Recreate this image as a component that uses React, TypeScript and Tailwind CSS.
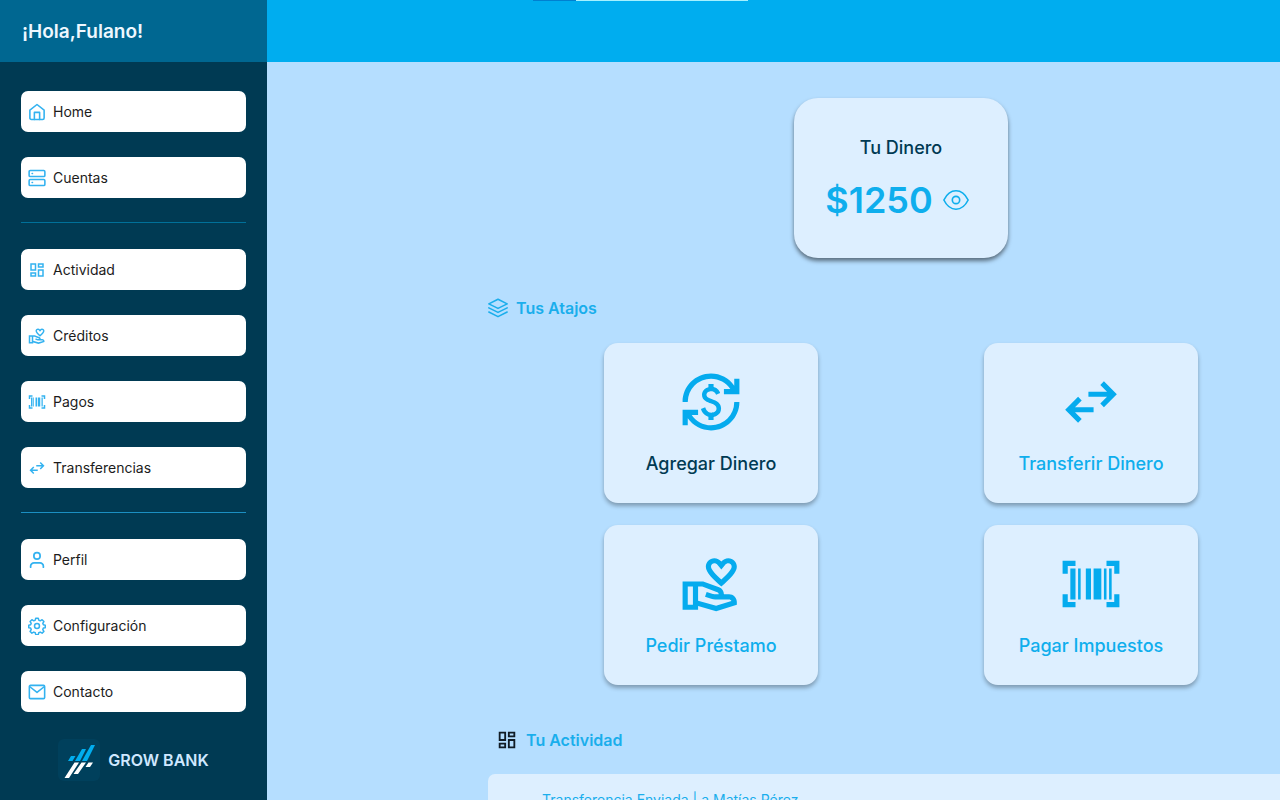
import type { ReactNode } from "react";
import { MdCurrencyExchange, MdOutlineDashboard, MdOutlineVolunteerActivism } from "react-icons/md";

type IconProps = { className?: string };

function LineIcon({ className, width = 1.5, children }: IconProps & { width?: number; children: ReactNode }) {
  return (
    <svg
      viewBox="0 0 24 24"
      fill="none"
      stroke="currentColor"
      strokeWidth={width}
      strokeLinecap="round"
      strokeLinejoin="round"
      className={className}
      aria-hidden="true"
    >
      {children}
    </svg>
  );
}

const HomeIcon = ({ className }: IconProps) => (
  <LineIcon className={className} width={2.1}>
    <path d="M2.500 9.500 12 2l9.500 7.500V20a2 2 0 0 1-2 2h-15a2 2 0 0 1-2-2z" />
    <path d="M8.500 22v-9.500h7V22" />
  </LineIcon>
);

const ServerIcon = ({ className }: IconProps) => (
  <LineIcon className={className} width={2.1}>
    <rect x="1.5" y="2" width="21" height="8" rx="1.500" />
    <rect x="1.5" y="14" width="21" height="8" rx="1.500" />
    <path d="M5.5 6h.5M5.5 18h.5" />
  </LineIcon>
);

const UserIcon = ({ className }: IconProps) => (
  <LineIcon className={className} width={2.300}>
    <circle cx="12" cy="6.5" r="4.2" />
    <path d="M3.500 21.500v-1.200a4.500 4.500 0 0 1 4.500-4.500h8a4.500 4.500 0 0 1 4.500 4.500v1.200" />
  </LineIcon>
);

const GearIcon = ({ className }: IconProps) => (
  <LineIcon className={className} width={2}>
    <circle cx="12" cy="12" r="3.300" />
    <path d="M10.300 1.500h3.400l.6 2.700 2 .9 2.500-1.500 2.400 2.400-1.500 2.400.8 2 2.500.6v3.200l-2.500.6-.8 2 1.500 2.400-2.400 2.400-2.500-1.500-2 .9-.6 2.500h-3.400l-.6-2.500-2-.9-2.500 1.500-2.400-2.400 1.500-2.400-.8-2-2.500-.6v-3.200l2.500-.6.8-2-1.500-2.400 2.400-2.400 2.500 1.500 2-.9z" />
  </LineIcon>
);

const MailIcon = ({ className }: IconProps) => (
  <LineIcon className={className} width={2.1}>
    <rect x="1.800" y="3.200" width="20.400" height="17.600" rx="1.500" />
    <path d="m2.500 5 9.500 7.500L21.500 5" />
  </LineIcon>
);

const EyeIcon = ({ className }: IconProps) => (
  <LineIcon className={className} width={1.5}>
    <path d="M.8 12C3.500 6.500 7.500 3.500 12 3.500s8.500 3 11.200 8.500c-2.700 5.500-6.700 8.500-11.200 8.500S3.500 17.500.8 12z" />
    <circle cx="12" cy="12" r="3.400" />
  </LineIcon>
);

const LayersIcon = ({ className }: IconProps) => (
  <LineIcon className={className} width={1.900}>
    <path d="M12 1.500 23 7 12 12.500 1 7z" />
    <path d="M1 11.800 12 17.300l11-5.500M1 16.800l11 5.500 11-5.500" />
  </LineIcon>
);

const SwapIcon = ({ className }: IconProps) => (
  <svg viewBox="0 0 24 24" fill="currentColor" className={className} aria-hidden="true">
    <path d="m22 9-5 5-1.400-1.400L18.200 10H11V8h7.200l-2.600-2.600L17 4zM2 15l5-5 1.400 1.400L5.800 14H13v2H5.800l2.600 2.600L7 20z" />
  </svg>
);

const BarcodeIcon = ({ className }: IconProps) => (
  <svg viewBox="0 0 24 24" fill="currentColor" className={className} aria-hidden="true">
    <path d="M4 6h2v12H4zM7 6h1v12H7zM10 6h2v12h-2zM13 6h3v12h-3zM17 6h1v12h-1zM19 6h1v12h-1z" />
    <path d="M1 3h5v2H3v3H1zM18 3h5v5h-2V5h-3zM1 16h2v3h3v2H1zM21 16h2v5h-5v-2h3z" />
  </svg>
);

const BrandIcon = ({ className }: IconProps) => (
  <svg viewBox="0 0 42 42" className={className} aria-hidden="true">
    <rect width="42" height="42" rx="6" fill="#00405c" />
    <path d="M37 6h-4L24 22h5zM28 10h-4l-7 12h5zM17.500 17h-4.500l-3 5h4.500z" fill="#00adef" />
    <path d="M16.500 23.500h4.500L11 39H6.500zM23.500 23.500H28L20 35h-4.500zM30.500 23.500H35L32 28h-4.500z" fill="#fff" />
  </svg>
);

type IconType = (props: IconProps) => ReactNode;
type Entry = { label: string; icon: IconType };

const groups: Entry[][] = [
  [
    { label: "Home", icon: HomeIcon },
    { label: "Cuentas", icon: ServerIcon },
  ],
  [
    { label: "Actividad", icon: MdOutlineDashboard },
    { label: "Créditos", icon: MdOutlineVolunteerActivism },
    { label: "Pagos", icon: BarcodeIcon },
    { label: "Transferencias", icon: SwapIcon },
  ],
  [
    { label: "Perfil", icon: UserIcon },
    { label: "Configuración", icon: GearIcon },
    { label: "Contacto", icon: MailIcon },
  ],
];

const shortcuts: (Entry & { tone: string })[] = [
  { label: "Agregar Dinero", icon: MdCurrencyExchange, tone: "text-[#003a53]" },
  { label: "Transferir Dinero", icon: SwapIcon, tone: "text-[#0eaeed]" },
  { label: "Pedir Préstamo", icon: MdOutlineVolunteerActivism, tone: "text-[#0eaeed]" },
  { label: "Pagar Impuestos", icon: BarcodeIcon, tone: "text-[#0eaeed]" },
];

function Sidebar() {
  return (
    <aside className="flex w-[267px] shrink-0 flex-col bg-[#003a53]">
      <div className="flex h-[62px] shrink-0 items-center bg-[#006791] px-[22px] pt-0.5">
        <p className="text-[19px] font-semibold text-[#eef8ff]">¡Hola,Fulano!</p>
      </div>
      <nav className="px-[21px] pt-[29px]">
        {groups.map((group, index) => (
          <div key={group[0].label}>
            {index > 0 && (
              <hr className={index === 1 ? "mt-6 mb-[26px] border-[#007099]" : "mt-6 mb-[26px] border-[#1b8fc2]"} />
            )}
            <ul className="flex flex-col gap-[25px]">
              {group.map(({ label, icon: Icon }) => (
                <li key={label}>
                  <a
                    href="#"
                    className="flex h-[41px] items-center gap-[7px] rounded-[7px] bg-white px-[7px] text-sm text-[#1c1c1c]"
                  >
                    <Icon className="size-[18px] text-[#33b2f0]" />
                    {label}
                  </a>
                </li>
              ))}
            </ul>
          </div>
        ))}
      </nav>
      <div className="mt-[27px] flex items-center justify-center gap-2">
        <BrandIcon className="size-[42px]" />
        <span className="text-base font-semibold text-[#cfe8ff]">GROW BANK</span>
      </div>
    </aside>
  );
}

export default function App() {
  return (
    <div className="flex h-screen overflow-hidden bg-[#b5deff] font-['Inter',sans-serif]">
      <Sidebar />
      <div className="min-w-[1268px] flex-1">
        <header className="h-[62px] bg-[#00adef] pl-[266px]">
          <div className="flex h-px w-[215px] bg-[#a5f0ff]">
            <div className="w-[43px] bg-[#0080d0]" />
          </div>
        </header>
        <main className="mx-auto w-[826px] pt-9">
          <section className="mx-auto flex h-40 w-[214px] flex-col items-center rounded-3xl bg-[#ddefff] pt-9 shadow-[0_3px_4px_rgba(0,0,0,0.5)]">
            <h2 className="text-lg leading-7 font-medium text-[#003a53]">Tu Dinero</h2>
            <div className="mt-[15px] mr-2 flex items-center gap-2.5 text-[#0eaeed]">
              <span className="text-4xl leading-[46px] font-semibold">$1250</span>
              <button type="button" aria-label="Mostrar u ocultar saldo">
                <EyeIcon className="size-[26px]" />
              </button>
            </div>
          </section>

          <section className="mt-[38px]">
            <h2 className="flex h-6 items-center gap-2 text-base font-semibold text-[#1aaeec]">
              <LayersIcon className="size-5" />
              Tus Atajos
            </h2>
            <div className="mt-[23px] grid grid-cols-[214px_214px] justify-center gap-x-[166px] gap-y-[22px]">
              {shortcuts.map(({ label, icon: Icon, tone }) => (
                <button
                  key={label}
                  type="button"
                  className="flex h-40 flex-col items-center rounded-[14px] bg-[#ddefff] pt-7 shadow-[0_3px_4px_rgba(0,0,0,0.3)]"
                >
                  <Icon className="size-[62px] text-[#05abee]" />
                  <span className={`mt-[17px] text-lg leading-7 font-medium ${tone}`}>{label}</span>
                </button>
              ))}
            </div>
          </section>

          <section className="mt-[43px]">
            <h2 className="flex h-6 items-center gap-2 pl-2 text-base font-semibold text-[#1aaeec]">
              <MdOutlineDashboard className="size-[22px] text-[#111c26]" />
              Tu Actividad
            </h2>
            <div className="mt-[22px] rounded-t-[7px] bg-[#ddefff] px-[54px] py-4">
              <p className="text-sm text-[#1aaeec]">Transferencia Enviada | a Matías Pérez</p>
            </div>
          </section>
        </main>
      </div>
    </div>
  );
}
